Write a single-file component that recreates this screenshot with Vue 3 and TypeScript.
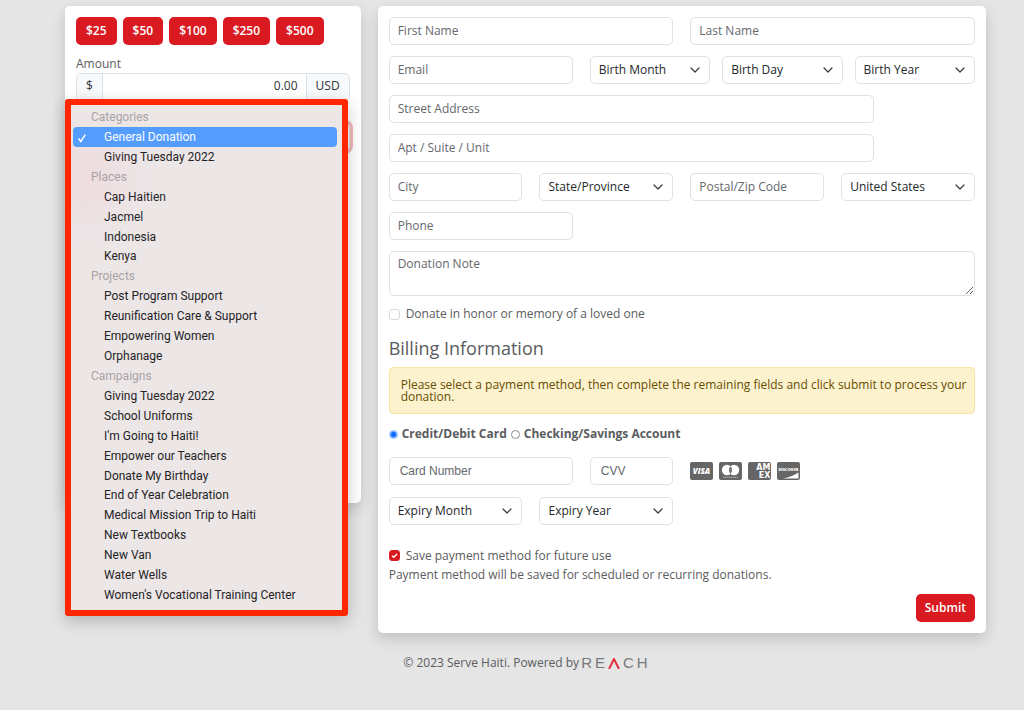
<script setup lang="ts">
import { ref } from 'vue'

interface Group {
  label: string
  options: string[]
}

const presets: number[] = [25, 50, 100, 250, 500]

const groups: Group[] = [
  { label: 'Categories', options: ['General Donation', 'Giving Tuesday 2022'] },
  { label: 'Places', options: ['Cap Haitien', 'Jacmel', 'Indonesia', 'Kenya'] },
  {
    label: 'Projects',
    options: ['Post Program Support', 'Reunification Care & Support', 'Empowering Women', 'Orphanage'],
  },
  {
    label: 'Campaigns',
    options: [
      'Giving Tuesday 2022',
      'School Uniforms',
      "I'm Going to Haiti!",
      'Empower our Teachers',
      'Donate My Birthday',
      'End of Year Celebration',
      'Medical Mission Trip to Haiti',
      'New Textbooks',
      'New Van',
      'Water Wells',
      "Women's Vocational Training Center",
    ],
  },
]

const selected = ref('Categories/General Donation')
const amount = ref('0.00')
const birthFields: string[] = ['Birth Month', 'Birth Day', 'Birth Year']
const payment = ref('card')
const honor = ref(false)
const savePayment = ref(true)

function keyOf(group: Group, option: string): string {
  return `${group.label}/${option}`
}
</script>

<template>
  <div class="page">
    <main class="columns">
      <section class="card donation">
        <div class="presets">
          <button v-for="p in presets" :key="p" type="button" class="btn" @click="amount = p.toFixed(2)">${{ p }}</button>
        </div>
        <label class="amount-label" for="amount">Amount</label>
        <div class="input-group">
          <span class="addon">$</span>
          <input id="amount" v-model="amount" class="amount" type="text" />
          <span class="addon">USD</span>
        </div>
        <div class="designation">
          <select v-model="selected" class="control designation-select" aria-label="Designation">
            <optgroup v-for="g in groups" :key="g.label" :label="g.label">
              <option v-for="o in g.options" :key="o" :value="keyOf(g, o)">{{ o }}</option>
            </optgroup>
          </select>
        </div>
        <div class="popup">
          <ul class="menu" role="listbox" aria-label="Designation options">
            <template v-for="g in groups" :key="g.label">
              <li class="menu-label" role="presentation">{{ g.label }}</li>
              <li
                v-for="o in g.options"
                :key="o"
                class="menu-item"
                :class="{ active: selected === keyOf(g, o) }"
                role="option"
                :aria-selected="selected === keyOf(g, o)"
                @click="selected = keyOf(g, o)"
              >
                <svg v-if="selected === keyOf(g, o)" class="tick" viewBox="0 0 10 10" aria-hidden="true">
                  <path d="M1.5 5.6 3.8 8.4 8.3 1.6" />
                </svg>
                {{ o }}
              </li>
            </template>
          </ul>
        </div>
      </section>

      <form class="card details" @submit.prevent>
        <div class="fields">
          <input class="control span-6" type="text" placeholder="First Name" aria-label="First Name" />
          <input class="control span-6" type="text" placeholder="Last Name" aria-label="Last Name" />
          <input class="control span-4" type="email" placeholder="Email" aria-label="Email" />
          <div class="birth span-8">
            <div v-for="b in birthFields" :key="b" class="select">
              <select class="control" :aria-label="b"><option>{{ b }}</option></select>
              <svg viewBox="0 0 10 10" aria-hidden="true"><path d="m1 3 4 4 4-4" /></svg>
            </div>
          </div>
          <input class="control span-10" type="text" placeholder="Street Address" aria-label="Street Address" />
          <input class="control span-10" type="text" placeholder="Apt / Suite / Unit" aria-label="Apt / Suite / Unit" />
          <input class="control span-3 row-start" type="text" placeholder="City" aria-label="City" />
          <div class="select span-3">
            <select class="control" aria-label="State/Province"><option>State/Province</option></select>
            <svg viewBox="0 0 10 10" aria-hidden="true"><path d="m1 3 4 4 4-4" /></svg>
          </div>
          <input class="control span-3" type="text" placeholder="Postal/Zip Code" aria-label="Postal/Zip Code" />
          <div class="select span-3">
            <select class="control" aria-label="Country"><option>United States</option></select>
            <svg viewBox="0 0 10 10" aria-hidden="true"><path d="m1 3 4 4 4-4" /></svg>
          </div>
          <input class="control span-4" type="tel" placeholder="Phone" aria-label="Phone" />
          <textarea class="control note span-12" placeholder="Donation Note" aria-label="Donation Note"></textarea>
        </div>

        <label class="check honor"><input v-model="honor" type="checkbox" />Donate in honor or memory of a loved one</label>

        <h2>Billing Information</h2>
        <p class="alert">
          Please select a payment method, then complete the remaining fields and click submit to process your donation.
        </p>

        <div class="methods">
          <label><input v-model="payment" type="radio" name="method" value="card" />Credit/Debit Card</label>
          <label><input v-model="payment" type="radio" name="method" value="bank" />Checking/Savings Account</label>
        </div>

        <div class="fields card-fields">
          <input class="control hosted span-4" type="text" placeholder="Card Number" aria-label="Card Number" />
          <input class="control hosted span-2" type="text" placeholder="CVV" aria-label="CVV" />
          <div class="brands span-6">
            <svg viewBox="0 0 23 18" role="img" aria-label="Visa">
              <rect width="23" height="18" rx="2" fill="#666" />
              <text x="11.5" y="12.2" text-anchor="middle" class="visa">VISA</text>
            </svg>
            <svg viewBox="0 0 23 18" role="img" aria-label="Mastercard">
              <rect width="23" height="18" rx="2" fill="#666" />
              <circle cx="8" cy="8" r="5.2" fill="#fff" />
              <circle cx="15" cy="8" r="5.2" fill="#fff" />
              <path d="M11.5 4.2a5.2 5.2 0 0 1 0 7.6 5.2 5.2 0 0 1 0-7.6z" fill="#777" />
              <path d="M4 15.3h15" stroke="#bbb" stroke-dasharray="1.4 .6" />
            </svg>
            <svg viewBox="0 0 23 18" role="img" aria-label="American Express">
              <rect width="23" height="18" rx="2" fill="#666" />
              <text x="22.5" y="8.4" text-anchor="end" class="amex">AM</text>
              <text x="22.5" y="16.4" text-anchor="end" class="amex">EX</text>
            </svg>
            <svg viewBox="0 0 23 18" role="img" aria-label="Discover">
              <rect width="23" height="18" rx="2" fill="#666" />
              <text x="11.5" y="9" text-anchor="middle" class="discover">DISCOVER</text>
              <path d="M6 16.5C12 15.4 17 13.4 21.5 10.5v6z" fill="#fff" />
            </svg>
          </div>
          <div class="select span-3">
            <select class="control" aria-label="Expiry Month"><option>Expiry Month</option></select>
            <svg viewBox="0 0 10 10" aria-hidden="true"><path d="m1 3 4 4 4-4" /></svg>
          </div>
          <div class="select span-3">
            <select class="control" aria-label="Expiry Year"><option>Expiry Year</option></select>
            <svg viewBox="0 0 10 10" aria-hidden="true"><path d="m1 3 4 4 4-4" /></svg>
          </div>
        </div>

        <label class="check save"><input v-model="savePayment" type="checkbox" />Save payment method for future use</label>
        <p class="hint">Payment method will be saved for scheduled or recurring donations.</p>
        <div class="actions"><button type="submit" class="btn submit">Submit</button></div>
      </form>
    </main>

    <footer>
      <span>© 2023 Serve Haiti. Powered by</span>
      <a href="#" class="reach" aria-label="REACH">
        <span>R</span><span>E</span>
        <svg viewBox="0 0 12 11" aria-hidden="true"><path d="M1 11 6 1l5 10" /></svg>
        <span>C</span><span>H</span>
      </a>
    </footer>
  </div>
</template>

<style>
body {
  margin: 0;
  background: #e5e5e5;
}
</style>

<style scoped>
* {
  box-sizing: border-box;
}
.page {
  padding: 6px 38px 24px 65px;
  font: 12px/18px 'Open Sans', 'Noto Sans', sans-serif;
  color: #5a5c5e;
}
.columns {
  display: grid;
  grid-template-columns: repeat(12, minmax(0, 1fr));
  column-gap: 17px;
  align-items: start;
}
.card {
  background: #fff;
  border-radius: 5px;
  box-shadow: 0 6px 14px rgba(0, 0, 0, 0.16);
  padding: 11px;
}
.donation {
  position: relative;
  grid-column: span 4;
  min-height: 497px;
}
.details {
  grid-column: span 8;
}
.presets {
  display: flex;
  gap: 6px;
}
.btn {
  height: 28px;
  padding: 0 10px 1px;
  border: 0;
  border-radius: 5px;
  background: #d91a21;
  color: #fff;
  font: 600 12px/18px 'Open Sans', 'Noto Sans', sans-serif;
  cursor: pointer;
}
.submit {
  padding: 0 9px 1px;
}
.amount-label {
  display: block;
  margin-top: 10px;
}
.input-group {
  display: flex;
  height: 28px;
  border: 1px solid #dde2e6;
  border-radius: 5px;
  overflow: hidden;
}
.addon {
  display: flex;
  align-items: center;
  padding: 0 9px 2px;
  background: #f8f9fa;
  color: #303438;
}
.amount {
  flex: 1;
  min-width: 0;
  padding: 0 8px 2px;
  border: 0;
  border-left: 1px solid #dde2e6;
  border-right: 1px solid #dde2e6;
  text-align: right;
  font: inherit;
  color: #303438;
}
.designation {
  margin-top: 22px;
}
.designation-select {
  border-color: #d91a21;
  box-shadow: 0 0 0 3px #f4b8ba;
}
.popup {
  position: absolute;
  top: 93px;
  left: 0;
  right: 13px;
  height: 517px;
  padding: 2px 5px 5px 2px;
  border: 6px solid #ff2600;
  border-radius: 3px;
  background: radial-gradient(circle at 16px 72px, #efdcdf 0, #ece6e7 66px);
  box-shadow: 0 5px 16px rgba(0, 0, 0, 0.22);
}
.menu {
  display: grid;
  grid-auto-rows: minmax(0, 1fr);
  height: 100%;
  margin: 0;
  padding: 0;
  list-style: none;
  font: 12px/21px Roboto, Inter, 'Liberation Sans', sans-serif;
  color: #252324;
}
.menu-label {
  padding-left: 18px;
  color: #a9a3a5;
}
.menu-item {
  position: relative;
  padding-left: 31px;
  border-radius: 4px;
  cursor: default;
}
.menu-item.active {
  background: #549dff;
  color: #fff;
}
.tick {
  position: absolute;
  left: 4px;
  top: 6px;
  width: 10px;
  height: 10px;
  fill: none;
  stroke: #fff;
  stroke-width: 1.5;
}
.fields {
  display: grid;
  grid-template-columns: repeat(12, minmax(0, 1fr));
  gap: 11px 17px;
}
.span-2 {
  grid-column: span 2;
}
.span-3 {
  grid-column: span 3;
}
.row-start {
  grid-column: 1 / span 3;
}
.span-4 {
  grid-column: span 4;
}
.span-6 {
  grid-column: span 6;
}
.span-8 {
  grid-column: span 8;
}
.span-10 {
  grid-column: span 10;
}
.span-12 {
  grid-column: span 12;
}
.control {
  display: block;
  width: 100%;
  height: 28px;
  padding: 0 8px 2px;
  border: 1px solid #dde2e6;
  border-radius: 5px;
  background: #fff;
  color: #24282c;
  font: inherit;
  appearance: none;
}
.control::placeholder {
  color: #65686b;
  opacity: 1;
}
select.control {
  padding-bottom: 1px;
}
.hosted {
  padding: 0 10px;
  font-family: 'Liberation Sans', Arial, sans-serif;
}
.note {
  height: 45px;
  padding: 3px 8px;
  resize: vertical;
}
.birth {
  display: grid;
  grid-template-columns: repeat(3, minmax(0, 1fr));
  gap: 12px;
}
.select {
  position: relative;
}
.select svg {
  position: absolute;
  right: 10px;
  top: 9px;
  width: 10px;
  height: 10px;
  fill: none;
  stroke: #343a40;
  stroke-width: 1.2;
  stroke-linecap: round;
  stroke-linejoin: round;
  pointer-events: none;
}
.check {
  display: flex;
  align-items: center;
  gap: 6px;
}
.check input {
  appearance: none;
  width: 11px;
  height: 11px;
  margin: 0;
  border: 1px solid #d5dade;
  border-radius: 3px;
  background: #fff;
}
.check input:checked {
  border-color: #d91a21;
  background: #d91a21 url("data:image/svg+xml,%3Csvg xmlns='http://www.w3.org/2000/svg' viewBox='0 0 10 10'%3E%3Cpath d='M2.3 5.2 4.2 7 7.8 3.4' fill='none' stroke='white' stroke-width='1.5'/%3E%3C/svg%3E") center / 9px 9px no-repeat;
}
.honor {
  margin-top: 9px;
}
h2 {
  margin: 13px 0 7px;
  font-size: 18px;
  line-height: 24px;
  font-weight: 400;
}
.alert {
  margin: 0;
  padding: 11px 4px 10px 11px;
  border: 1px solid #fbe5a3;
  border-radius: 4px;
  background: #fdf2ce;
  color: #664d03;
  line-height: 12px;
  font-weight: 500;
}
.methods {
  display: flex;
  gap: 4px;
  margin-top: 11px;
  font-weight: 700;
}
.methods label {
  display: flex;
  align-items: center;
  gap: 4px;
}
.methods input {
  appearance: none;
  width: 9px;
  height: 9px;
  margin: 0;
  border: 1px solid #8a8d90;
  border-radius: 50%;
  background: #fff;
}
.methods input:checked {
  border-color: #8dbbff;
  background: radial-gradient(circle, #0d6efd 2px, #d5e6ff 4px);
}
.card-fields {
  margin-top: 14px;
  row-gap: 12px;
}
.brands {
  display: flex;
  align-items: center;
  gap: 6px;
}
.brands svg {
  width: 23px;
  height: 18px;
}
.brands text {
  fill: #fff;
  font-family: 'Open Sans', sans-serif;
  font-weight: 800;
}
.brands .visa {
  font-size: 8px;
  font-style: italic;
}
.brands .amex {
  font-family: 'DejaVu Sans', sans-serif;
  font-size: 8px;
}
.brands .discover {
  font-size: 4px;
}
.save {
  margin-top: 21px;
  line-height: 19px;
}
.hint {
  margin: 0 0 10px;
  line-height: 19px;
}
.actions {
  display: flex;
  justify-content: flex-end;
}
footer {
  display: flex;
  justify-content: center;
  align-items: center;
  gap: 2px;
  margin-top: 21px;
}
.reach {
  display: flex;
  align-items: center;
  gap: 3px;
  color: #77797b;
  font: 15px/18px 'Liberation Sans', Arial, sans-serif;
  text-decoration: none;
}
.reach svg {
  width: 12px;
  height: 11px;
  fill: none;
  stroke: #e5313f;
  stroke-width: 2;
}
</style>
